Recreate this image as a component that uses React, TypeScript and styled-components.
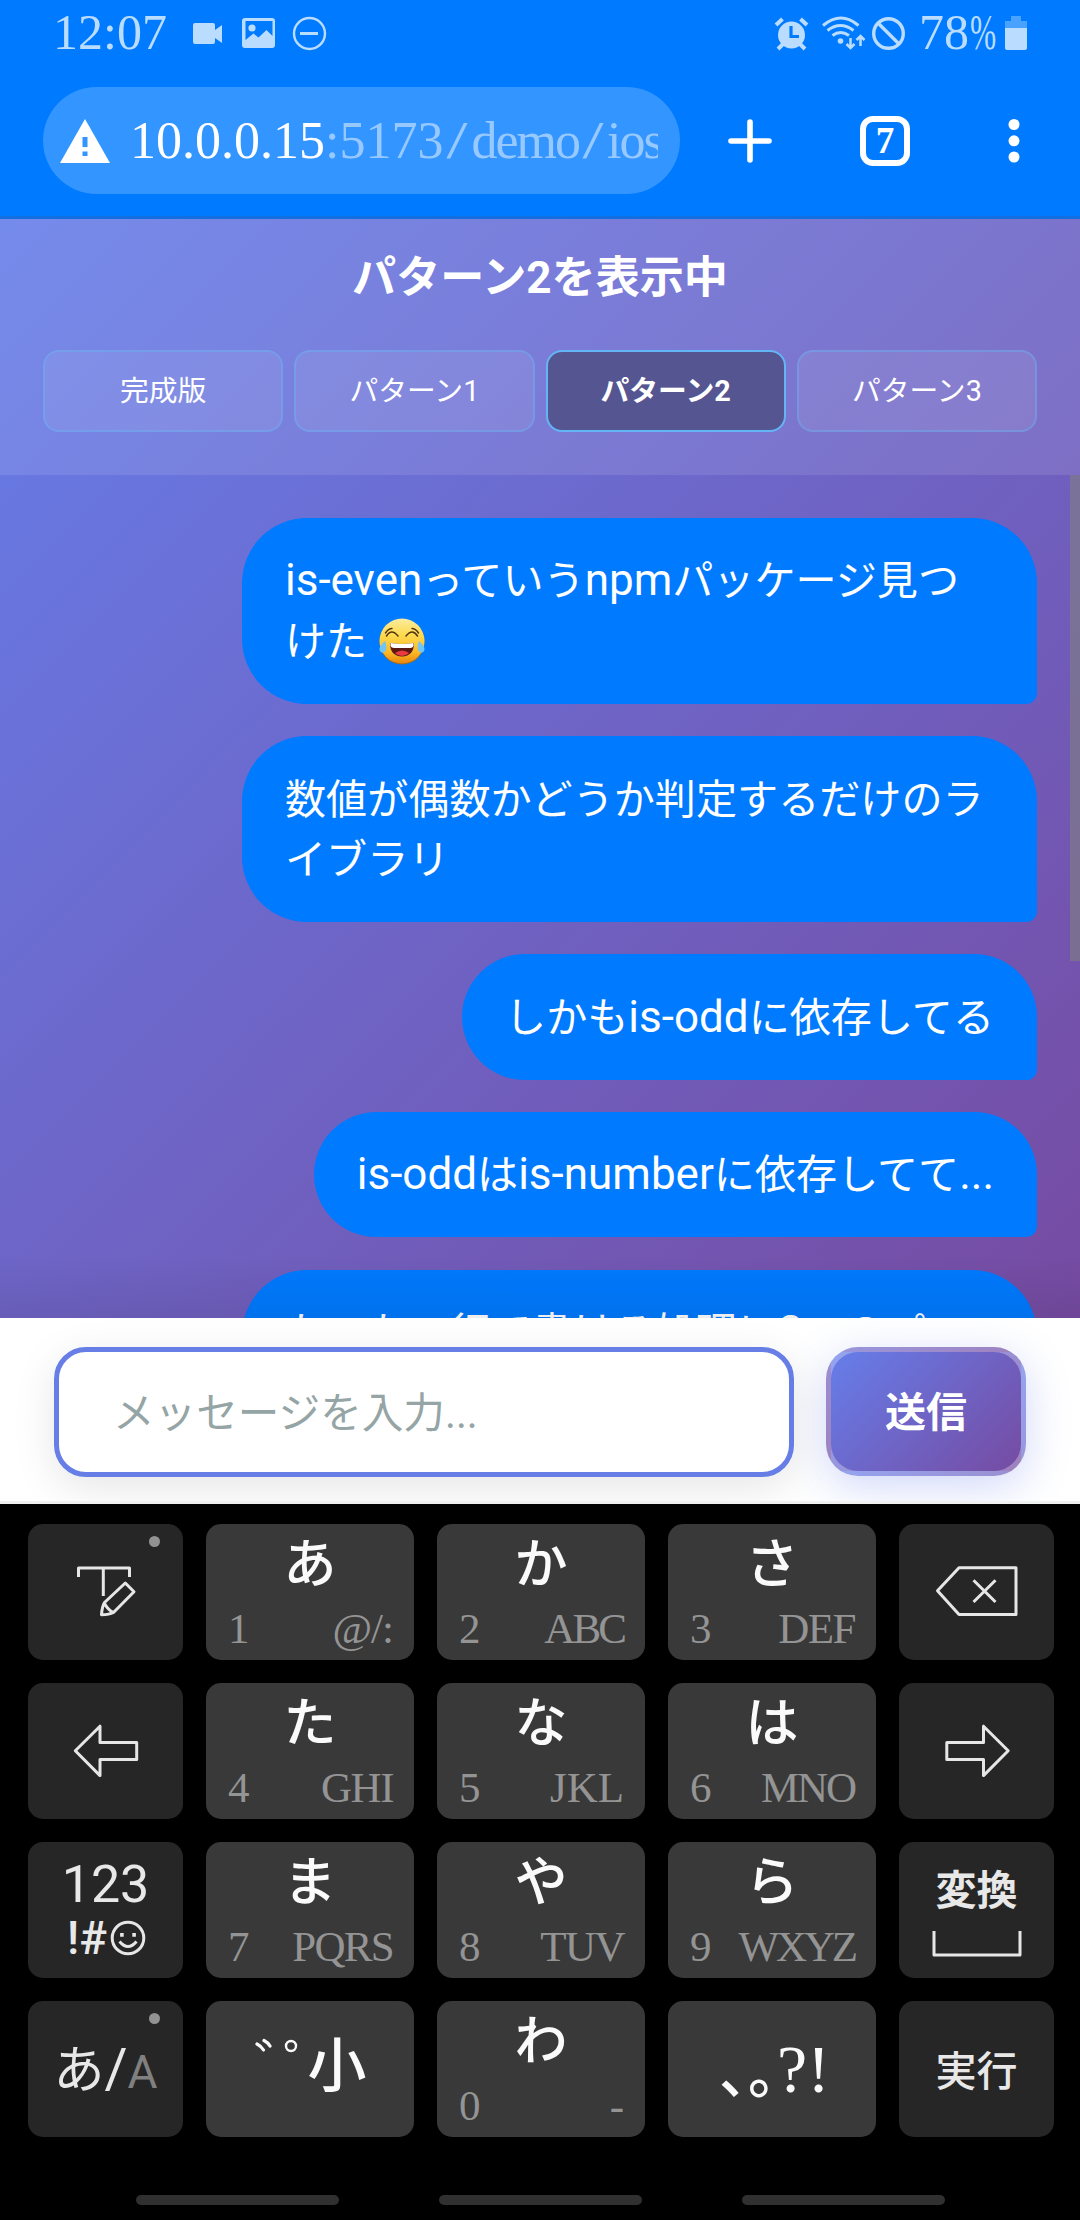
import React from "react";
import styled, { createGlobalStyle, css } from "styled-components";

const SANS = `Roboto, "Noto Sans CJK JP", sans-serif`;
const SERIF = `"Liberation Serif", "Noto Sans CJK JP", serif`;

const GlobalStyle = createGlobalStyle`
  *, *::before, *::after { box-sizing: border-box; }
  body { margin: 0; background: #000; font-family: ${SANS}; }
  button { font: inherit; color: inherit; border: 0; padding: 0; margin: 0; }
`;

const Phone = styled.div`
  width: 1080px;
  height: 2220px;
  display: flex;
  flex-direction: column;
  overflow: hidden;
`;

/* ---------- browser chrome ---------- */

const Chrome = styled.header`
  height: 219px;
  flex: none;
  background: #007aff;
  border-bottom: 3px solid #136fe0;
  font-family: ${SERIF};
`;

const StatusBar = styled.div`
  height: 65px;
  padding: 0 53px 0 53px;
  display: flex;
  align-items: center;
  justify-content: space-between;
  color: #b9dcff;
  font-size: 50px;
  line-height: 65px;
`;

const StatusGroup = styled.div`
  display: flex;
  align-items: center;
  height: 65px;

  svg { display: block; flex: none; }
`;

const Clock = styled.span`
  width: 138px;
`;

const Battery = styled.span`
  margin-left: 13px;
  width: 86px;
  display: flex;
`;

const Percent = styled.span`
  width: 26px;
  margin-left: 1px;
  transform: scaleX(0.63);
  transform-origin: left;
`;

const Toolbar = styled.div`
  display: flex;
  align-items: center;
  height: 107px;
  margin-top: 22px;
  padding: 0 0 0 43px;
`;

const UrlPill = styled.div`
  display: flex;
  align-items: center;
  width: 637px;
  height: 107px;
  padding: 0 22px 0 17px;
  border-radius: 54px;
  background: #3395ff;
`;

const UrlText = styled.div`
  flex: 1;
  margin-left: 20px;
  overflow: hidden;
  white-space: nowrap;
  font-size: 52px;
  line-height: 70px;
  color: #fff;
`;

const UrlRest = styled.span`
  color: #97c9ff;
`;

const PathWord = styled.span`
  letter-spacing: -2px;
`;

const Slash = styled.span`
  display: inline-block;
  width: 28px;
  text-align: center;
  transform: scaleX(1.45);
`;

const IconButton = styled.button<{ $gap: number }>`
  display: flex;
  margin-left: ${(p) => p.$gap}px;
  background: none;
`;

const TabCount = styled.button`
  width: 50px;
  height: 50px;
  margin-left: 88px;
  border: 6px solid #fff;
  border-radius: 13px;
  background: none;
  color: #fff;
  font-size: 37px;
  font-weight: 700;
  line-height: 38px;
`;

/* ---------- chat page ---------- */

const Chat = styled.main`
  height: 1099px;
  flex: none;
  display: flex;
  flex-direction: column;
  overflow: hidden;
  background: linear-gradient(135deg, #667eea 0%, #764ba2 100%);
`;

const PatternHeader = styled.section`
  height: 256px;
  flex: none;
  padding: 25px 43px 0;
  background: rgba(255, 255, 255, 0.1);
`;

const Title = styled.h1`
  margin: 0;
  height: 66px;
  color: #fff;
  font-size: 44.1px;
  font-weight: 700;
  line-height: 69px;
  text-align: center;
`;

const PatternRow = styled.nav`
  display: grid;
  grid-template-columns: repeat(4, 1fr);
  gap: 11px;
  margin-top: 40px;
`;

const PatternButton = styled.button<{ $active?: boolean }>`
  height: 82px;
  padding-bottom: 6px;
  border: 2px solid rgba(100, 181, 246, 0.4);
  border-radius: 16px;
  background: rgba(255, 255, 255, 0.08);
  color: #fff;
  font-size: 28.8px;
  ${(p) =>
    p.$active &&
    css`
      border-color: #64b5f6;
      background: #555591;
      font-weight: 700;
    `}
`;

const MessageArea = styled.section`
  position: relative;
  flex: 1;
  min-height: 0;
  overflow: hidden;
`;

const MessageList = styled.div`
  display: flex;
  flex-direction: column;
  align-items: flex-end;
  gap: 32.4px;
  padding: 43px;
`;

const Bubble = styled.p`
  flex: none;
  max-width: 795px;
  margin: 0;
  padding: 33.4px 43px 31.4px;
  border-radius: 65px 65px 11px 65px;
  background: #007aff;
  color: #fff;
  font-size: 41.1px;
  line-height: 60.5px;
`;

const Latin = styled.span`
  font-size: 44px;
  line-height: 1;
`;

const Emoji = styled.svg`
  width: 48px;
  height: 48px;
  margin-left: 1px;
  vertical-align: -9px;
`;

const ScrollThumb = styled.div`
  position: absolute;
  top: 0;
  right: 0;
  width: 10px;
  height: 486px;
  background: rgba(128, 128, 128, 0.6);
`;

const BottomShade = styled.div`
  position: absolute;
  left: 0;
  right: 0;
  bottom: 0;
  height: 64px;
  background: linear-gradient(rgba(0, 0, 0, 0), rgba(0, 0, 0, 0.07));
`;

const Composer = styled.form`
  height: 186px;
  flex: none;
  display: flex;
  align-items: flex-start;
  gap: 32px;
  padding: 29px 54px 0;
  overflow: hidden;
  background: #fff;
  border-bottom: 3px solid #f0f0f0;
`;

const MessageInput = styled.input`
  width: 740px;
  height: 130px;
  padding: 2px 54px 0;
  border: 5px solid #667ee6;
  border-radius: 32px;
  outline: none;
  background: #fff;
  box-shadow: 0 11px 43px rgba(0, 0, 0, 0.1);
  font-family: ${SANS};
  font-size: 41.6px;

  &::placeholder { color: #95a5a6; opacity: 1; }
`;

const SendButton = styled.button`
  width: 200px;
  height: 129px;
  padding-bottom: 6px;
  border: 5px solid rgba(255, 255, 255, 0.3);
  border-radius: 32px;
  background: linear-gradient(135deg, #667eea 0%, #764ba2 100%);
  box-shadow: 0 11px 43px rgba(102, 126, 234, 0.3);
  color: #fff;
  font-size: 41px;
  font-weight: 700;
`;

/* ---------- keyboard ---------- */

const Keyboard = styled.section`
  height: 676px;
  flex: none;
  display: grid;
  grid-template-columns: 155px 208px 208px 208px 155px;
  grid-auto-rows: 136px;
  column-gap: 23px;
  row-gap: 23px;
  padding: 20px 26px 0 28px;
  background: #000;
  font-family: ${SERIF};
`;

const Key = styled.button<{ $side?: boolean }>`
  position: relative;
  display: flex;
  flex-direction: column;
  align-items: center;
  justify-content: ${(p) => (p.$side ? "center" : "flex-start")};
  height: 136px;
  border-radius: 15px;
  background: ${(p) => (p.$side ? "#262626" : "#393939")};
  color: #e8e8e8;

  svg { display: block; }
`;

const Kana = styled.span`
  height: 80px;
  color: #fafafa;
  font-size: 53px;
  font-weight: 500;
  line-height: 83px;
`;

const KeyHints = styled.span`
  width: 100%;
  display: flex;
  justify-content: space-between;
  padding: 0 21px 0 22px;
  color: #949494;
  font-size: 43px;
  line-height: 50px;
`;

const Letters = styled.span<{ $tracking: number }>`
  letter-spacing: ${(p) => p.$tracking}px;
`;

const SymbolLabel = styled.span`
  display: flex;
  align-items: center;
  height: 136px;
  color: #fafafa;
  font-size: 56px;
  font-weight: 500;
  line-height: 60px;
`;

const VoicedMarks = styled(SymbolLabel)`
  height: 131px;
  padding-left: 2px;
  font-size: 59px;

  svg { margin: 0 8px 40px 0; }
`;

const Punctuation = styled.span`
  padding-left: 5px;
  letter-spacing: 1px;
  font-family: "Noto Sans CJK JP", sans-serif;
  font-feature-settings: "halt";
`;

const Asks = styled.span`
  font-size: 68px;
  font-weight: 400;
`;

const HoldDot = styled.i`
  position: absolute;
  top: 12px;
  right: 23px;
  width: 11px;
  height: 11px;
  border-radius: 50%;
  background: #929292;
`;

const Digits = styled.span`
  font-family: ${SANS};
  font-size: 52px;
  line-height: 56px;
`;

const SymbolRow = styled.span`
  display: flex;
  align-items: center;
  gap: 3px;
  padding-left: 2px;
  font-family: ${SANS};
  font-size: 46px;
  font-weight: 500;
  line-height: 50px;
`;

const LangLabel = styled.span`
  padding-top: 3px;
  font-family: ${SANS};
  font-size: 51px;
  line-height: 60px;
  white-space: nowrap;
`;

const LangSlash = styled.span`
  font-size: 56px;
`;

const LangDim = styled.span`
  color: #808080;
  font-size: 46px;
`;

const ActionLabel = styled.span<{ $strong?: boolean }>`
  padding-top: ${(p) => (p.$strong ? 0 : 5)}px;
  font-size: 41px;
  font-weight: ${(p) => (p.$strong ? 700 : 500)};
  line-height: 56px;
`;

const NavBar = styled.footer`
  height: 40px;
  flex: none;
  display: flex;
  gap: 100px;
  padding: 15px 0 0 136px;
  background: #000;
`;

const NavPill = styled.span`
  width: 203px;
  height: 10px;
  border-radius: 5px;
  background: #303030;
`;

/* ---------- icons ---------- */

const StatusLeftIcons = () => (
  <svg width="136" height="40" viewBox="190 12 136 40" fill="#b9dcff">
    <path d="M194 22h18q2 0 2 2v5l7-5v18l-7-5v4q0 2-2 2h-18q-2 0-2-2V24q0-2 2-2z" />
    <path
      fillRule="evenodd"
      d="M244 17h27q3 0 3 3v24q0 3-3 3h-27q-3 0-3-3V20q0-3 3-3zm.5 3v19l8-6.500 5 4 8-7.500 6 6V20z"
    />
    <circle cx="251" cy="27" r="3.600" />
    <circle cx="308.500" cy="32.500" r="15.500" fill="none" stroke="#b9dcff" strokeWidth="2.400" />
    <path d="M299 31h18v3h-18z" />
  </svg>
);

const StatusRightIcons = () => (
  <svg width="134" height="40" viewBox="772 12 134 40" fill="none" stroke="#b9dcff">
    <circle cx="791.500" cy="34" r="13.500" fill="#b9dcff" stroke="none" />
    <path d="M776 24l6.500-6M807 24l-6.500-6" strokeWidth="4" />
    <path d="M783 43l-5 5M800 43l5 5" strokeWidth="4" />
    <path d="M791 25v10.500h8" stroke="#007aff" strokeWidth="3.200" />
    <path d="M823 24.500q18-15 35.500 0" strokeWidth="3" />
    <path d="M827.500 29.500q13-10 26 0" strokeWidth="3" />
    <path d="M832.500 34.500q8-6 16.500 0" strokeWidth="3" />
    <circle cx="840.500" cy="40" r="2.800" fill="#b9dcff" stroke="none" />
    <path d="M850.500 37v10M846.500 43l4 4 4-4M860.500 45v-10M856.500 39l4-4 4 4" strokeWidth="2.500" />
    <circle cx="888.500" cy="32.500" r="14.800" strokeWidth="3.400" />
    <path d="M878 22l21 21" strokeWidth="3.400" />
  </svg>
);

const BatteryIcon = () => (
  <svg width="22" height="34" viewBox="0 0 22 34">
    <path d="M6 0h10v5h6v8H0V5h6z" fill="#4aa2ff" />
    <path d="M0 12h22v20q0 2-2 2H2q-2 0-2-2z" fill="#b9dcff" />
  </svg>
);

const WarningIcon = () => (
  <svg width="50" height="44" viewBox="0 0 50 44">
    <path d="M25 0l25 44H0z" fill="#fff" />
    <path d="M22.500 18h5v10h-5zM22.500 32.500h5v4.500h-5z" fill="#3395ff" />
  </svg>
);

const PlusIcon = () => (
  <svg width="44" height="44" viewBox="0 0 44 44" stroke="#fff" strokeWidth="5.600" strokeLinecap="round">
    <path d="M22 3v38M3 22h38" />
  </svg>
);

const MoreIcon = () => (
  <svg width="12" height="46" viewBox="0 0 12 46" fill="#fff">
    <circle cx="6" cy="6.500" r="5.500" />
    <circle cx="6" cy="22.800" r="5.500" />
    <circle cx="6" cy="39" r="5.500" />
  </svg>
);

const JoyEmoji = () => (
  <Emoji viewBox="0 0 48 48" role="img" aria-label="😂">
    <defs>
      <linearGradient id="joyFace" x1="0" y1="0" x2="0" y2="1">
        <stop offset="0" stopColor="#fbeca0" />
        <stop offset="0.350" stopColor="#fddb50" />
        <stop offset="0.750" stopColor="#fbb927" />
        <stop offset="1" stopColor="#e8860c" />
      </linearGradient>
    </defs>
    <circle cx="24" cy="25" r="22.500" fill="#a66a1c" />
    <circle cx="24" cy="24" r="22.500" fill="url(#joyFace)" />
    <path
      d="M8.500 19q5-8 11.500 0M28 19q6.500-8 11.500 0M7.500 16q3-4.500 6.500-4.500M40.500 16q-3-4.500-6.500-4.500"
      fill="none"
      stroke="#54330f"
      strokeWidth="1.500"
      strokeLinecap="round"
    />
    <path d="M12 26q12 2 24 0q0 13-12 13.500q-12-.5-12-13.500z" fill="#5b1712" />
    <path d="M12.500 26q11.500 2 23 0v3q-1 2-3 2H16q-2.500 0-3.500-2z" fill="#fff" />
    <path d="M17 36q7-5 14 0q-3 3-7 3t-7-3z" fill="#ea3a3f" />
    <path d="M7 24q-6 5-5.500 9q2 5 6 1q2-4-.5-10zM41 24q6 5 5.500 9q-2 5-6 1q-2-4 .5-10z" fill="#6fc6f5" />
  </Emoji>
);

const Line = styled.svg`
  fill: none;
  stroke: #e6e6e6;
  stroke-width: 3;
  stroke-linejoin: round;
`;

const HandwriteIcon = () => (
  <Line width="155" height="136" viewBox="28 1524 155 136">
    <path d="M78.500 1577v-9h51v9M103.300 1568v28" />
    <path d="M125.300 1583l8.700 8.700-20.500 20.800q-4 2-12 2.300.5-8 3-12.300zM104.500 1603.500q4 7 9 9" />
  </Line>
);

const BackspaceIcon = () => (
  <Line width="155" height="136" viewBox="899 1524 155 136">
    <path d="M937.500 1590.700l21.500-23h57v46.700h-57zM973.500 1580.300l22 21.700M995.500 1580.300l-22 21.700" />
  </Line>
);

const ArrowIcon = ({ flip }: { flip?: boolean }) => (
  <Line width="155" height="136" viewBox="28 1683 155 136">
    <path
      transform={flip ? "translate(212.500 0) scale(-1 1)" : undefined}
      d="M75.300 1750.700l24.700-24.500v16.200h36.700v17H100v16.200z"
    />
  </Line>
);

const SmileIcon = () => (
  <Line width="36" height="36" viewBox="0 0 36 36">
    <circle cx="18" cy="18" r="15.800" />
    <path d="M9.500 21.500q8.500 10 17 0" />
    <path d="M11.900 13v3.800M24.100 13v3.800" strokeWidth="3.600" />
  </Line>
);

const SpaceBracket = styled(Line)`
  margin-top: 12px;
`;

const SpaceIcon = () => (
  <SpaceBracket width="90" height="27" viewBox="0 0 90 27">
    <path d="M2 0v24h86V0" />
  </SpaceBracket>
);

const MarksIcon = () => (
  <svg width="44" height="18" viewBox="0 0 44 18">
    <path d="M2 6q4 2 6.500 6M9 2.500q4 2 6 5.500" fill="none" stroke="#fafafa" strokeWidth="3.200" strokeLinecap="round" />
    <circle cx="36" cy="8" r="5" fill="none" stroke="#fafafa" strokeWidth="2.400" />
  </svg>
);

/* ---------- screen ---------- */

const patterns = ["完成版", "パターン1", "パターン2", "パターン3"];

// Latin runs are set slightly larger than the surrounding kana and kanji.
const MixedText = ({ children }: { children: string }) => (
  <>
    {children
      .split(/([a-z0-9.-]+)/)
      .map((part, i) => (i % 2 ? <Latin key={i}>{part}</Latin> : part))}
  </>
);

const KanaKey = ({
  kana,
  digit,
  letters,
  tracking,
}: {
  kana: string;
  digit: string;
  letters: string;
  tracking: number;
}) => (
  <Key>
    <Kana>{kana}</Kana>
    <KeyHints>
      <span>{digit}</span>
      <Letters $tracking={tracking}>{letters}</Letters>
    </KeyHints>
  </Key>
);

export default function App() {
  return (
    <Phone>
      <GlobalStyle />
      <Chrome>
        <StatusBar>
          <StatusGroup>
            <Clock>12:07</Clock>
            <StatusLeftIcons />
          </StatusGroup>
          <StatusGroup>
            <StatusRightIcons />
            <Battery>
              78<Percent>%</Percent>
            </Battery>
            <BatteryIcon />
          </StatusGroup>
        </StatusBar>
        <Toolbar>
          <UrlPill>
            <WarningIcon />
            <UrlText>
              10.0.0.15
              <UrlRest>
                :5173<Slash>/</Slash>
                <PathWord>demo</PathWord>
                <Slash>/</Slash>
                <PathWord>ios</PathWord>
              </UrlRest>
            </UrlText>
          </UrlPill>
          <IconButton $gap={48} aria-label="新しいタブ">
            <PlusIcon />
          </IconButton>
          <TabCount>7</TabCount>
          <IconButton $gap={98} aria-label="メニュー">
            <MoreIcon />
          </IconButton>
        </Toolbar>
      </Chrome>

      <Chat>
        <PatternHeader>
          <Title>パターン2を表示中</Title>
          <PatternRow>
            {patterns.map((name) => (
              <PatternButton key={name} $active={name === "パターン2"}>
                {name}
              </PatternButton>
            ))}
          </PatternRow>
        </PatternHeader>
        <MessageArea>
          <MessageList>
            <Bubble>
              <MixedText>is-evenっていうnpmパッケージ見つけた </MixedText>
              <JoyEmoji />
            </Bubble>
            <Bubble>数値が偶数かどうか判定するだけのライブラリ</Bubble>
            <Bubble>
              <MixedText>しかもis-oddに依存してる</MixedText>
            </Bubble>
            <Bubble>
              <MixedText>is-oddはis-numberに依存してて...</MixedText>
            </Bubble>
            <Bubble>
              <MixedText>たった一行で書ける処理に2つのパッケージ</MixedText>
            </Bubble>
          </MessageList>
          <BottomShade />
          <ScrollThumb />
        </MessageArea>
      </Chat>

      <Composer>
        <MessageInput placeholder="メッセージを入力..." />
        <SendButton type="button">送信</SendButton>
      </Composer>

      <Keyboard>
        <Key $side>
          <HandwriteIcon />
          <HoldDot />
        </Key>
        <KanaKey kana="あ" digit="1" letters="@/:" tracking={-1} />
        <KanaKey kana="か" digit="2" letters="ABC" tracking={-2.9} />
        <KanaKey kana="さ" digit="3" letters="DEF" tracking={-1.5} />
        <Key $side>
          <BackspaceIcon />
        </Key>

        <Key $side>
          <ArrowIcon />
        </Key>
        <KanaKey kana="た" digit="4" letters="GHI" tracking={-1.5} />
        <KanaKey kana="な" digit="5" letters="JKL" tracking={0} />
        <KanaKey kana="は" digit="6" letters="MNO" tracking={-2.1} />
        <Key $side>
          <ArrowIcon flip />
        </Key>

        <Key $side>
          <Digits>123</Digits>
          <SymbolRow>
            !#
            <SmileIcon />
          </SymbolRow>
        </Key>
        <KanaKey kana="ま" digit="7" letters="PQRS" tracking={-1.7} />
        <KanaKey kana="や" digit="8" letters="TUV" tracking={-1.5} />
        <KanaKey kana="ら" digit="9" letters="WXYZ" tracking={-3.1} />
        <Key $side>
          <ActionLabel $strong>変換</ActionLabel>
          <SpaceIcon />
        </Key>

        <Key $side>
          <LangLabel>
            あ<LangSlash>/</LangSlash>
            <LangDim>A</LangDim>
          </LangLabel>
          <HoldDot />
        </Key>
        <Key>
          <VoicedMarks>
            <MarksIcon />小
          </VoicedMarks>
        </Key>
        <KanaKey kana="わ" digit="0" letters="-" tracking={0} />
        <Key>
          <SymbolLabel>
            <Punctuation>、。</Punctuation>
            <Asks>?!</Asks>
          </SymbolLabel>
        </Key>
        <Key $side>
          <ActionLabel>実行</ActionLabel>
        </Key>
      </Keyboard>

      <NavBar>
        <NavPill />
        <NavPill />
        <NavPill />
      </NavBar>
    </Phone>
  );
}
